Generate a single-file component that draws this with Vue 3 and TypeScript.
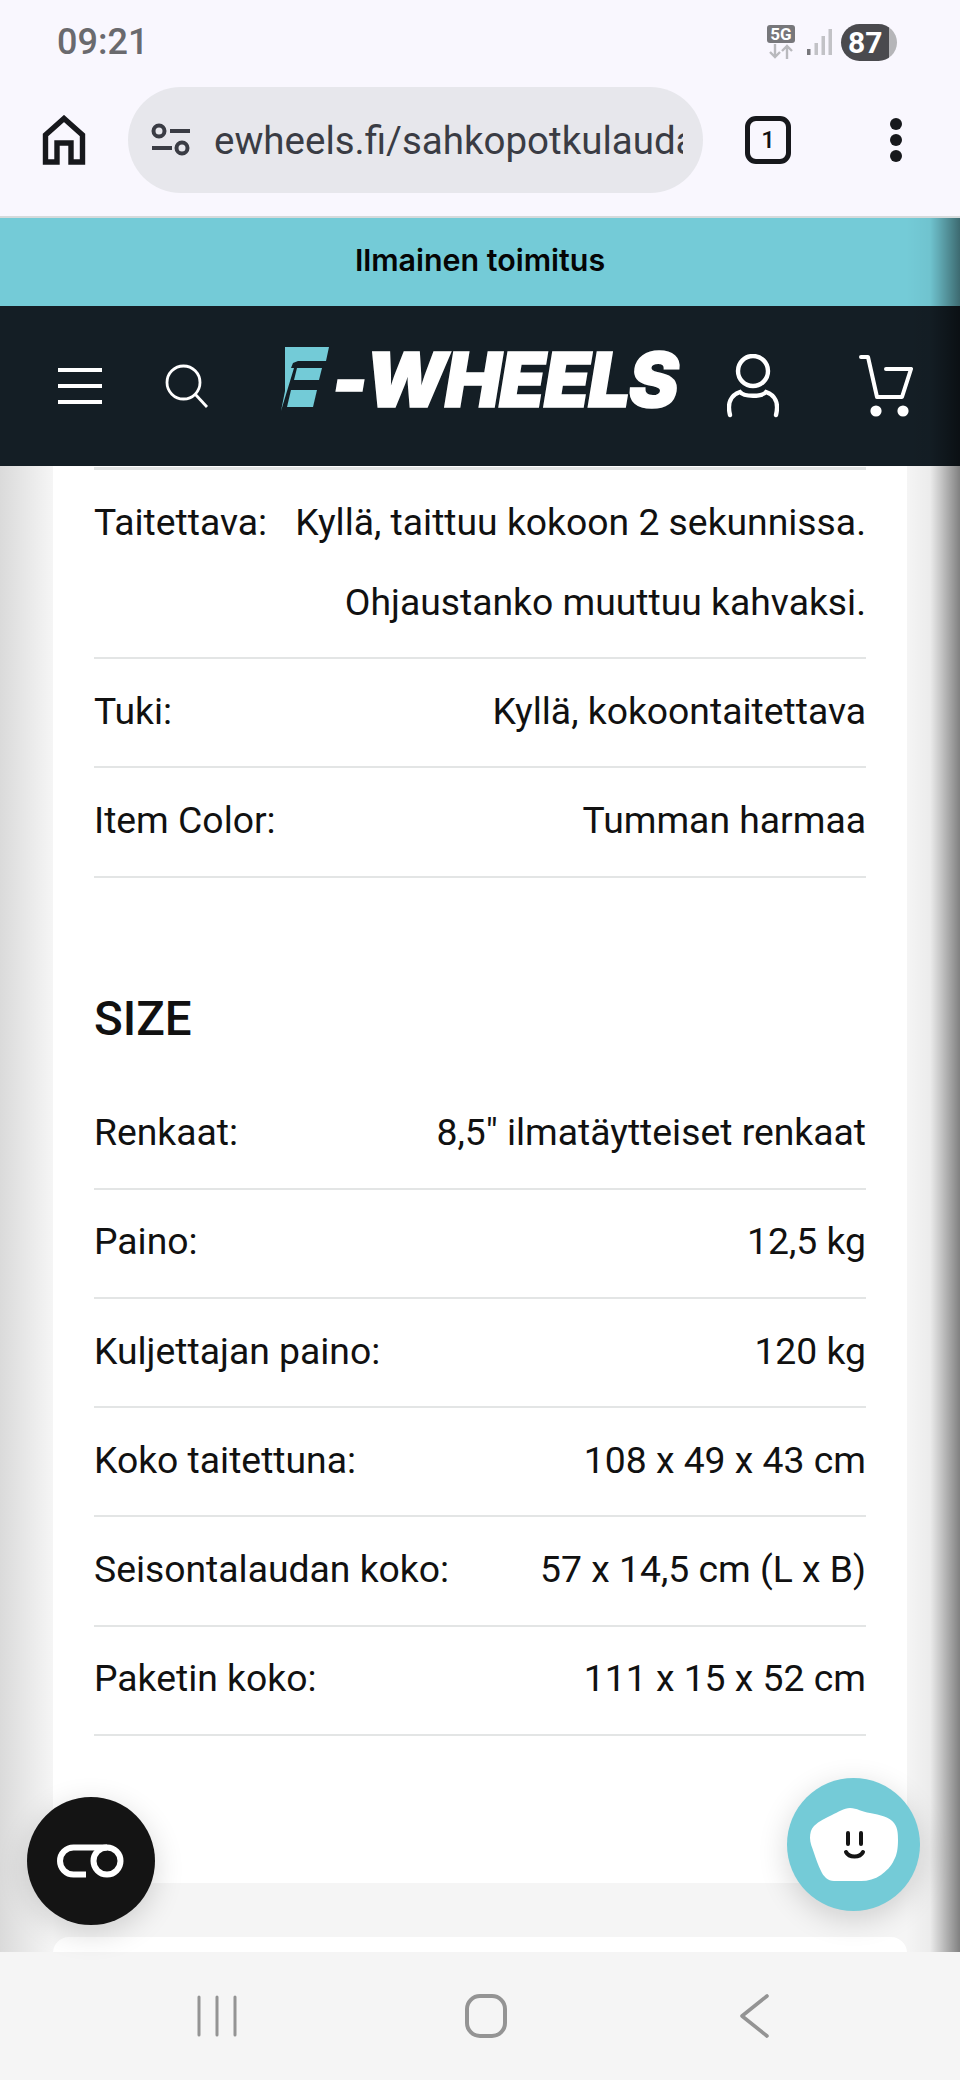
<script setup lang="ts">
interface SpecRow {
  label: string
  value: string[]
}

const colorRows: SpecRow[] = [
  { label: 'Taitettava:', value: ['Kyllä, taittuu kokoon 2 sekunnissa.', 'Ohjaustanko muuttuu kahvaksi.'] },
  { label: 'Tuki:', value: ['Kyllä, kokoontaitettava'] },
  { label: 'Item Color:', value: ['Tumman harmaa'] },
]

const sizeRows: SpecRow[] = [
  { label: 'Renkaat:', value: ['8,5" ilmatäytteiset renkaat'] },
  { label: 'Paino:', value: ['12,5 kg'] },
  { label: 'Kuljettajan paino:', value: ['120 kg'] },
  { label: 'Koko taitettuna:', value: ['108 x 49 x 43 cm'] },
  { label: 'Seisontalaudan koko:', value: ['57 x 14,5 cm (L x B)'] },
  { label: 'Paketin koko:', value: ['111 x 15 x 52 cm'] },
]
</script>

<template>
  <div class="screen">
    <div class="browser-chrome">
      <div class="status-bar">
        <span class="clock">09:21</span>
        <div class="status-icons">
          <div class="network">
            <span class="network-badge">5G</span>
            <svg width="28" height="15" viewBox="0 0 28 15" fill="none" stroke="#b9b9bd" stroke-width="2.4">
              <path d="M8 0v13M3 8l5 5 5-5" />
              <path d="M20 15V2M15 7l5-5 5 5" />
            </svg>
          </div>
          <svg class="signal" width="26" height="26" viewBox="0 0 26 26">
            <rect x="0" y="20" width="3.5" height="6" fill="#77777b" />
            <rect x="7.5" y="14" width="3.5" height="12" fill="#c2c2c6" />
            <rect x="14.5" y="7" width="3.5" height="19" fill="#c2c2c6" />
            <rect x="21.5" y="0" width="3.5" height="26" fill="#c2c2c6" />
          </svg>
          <div class="battery"><span>87</span></div>
        </div>
      </div>
      <div class="toolbar">
        <svg class="home-icon" width="44" height="50" viewBox="0 0 44 50" fill="none" stroke="#17181c" stroke-width="5.4">
          <path d="M3.5 47V20L22 3.5 40.5 20v27H29V28H15v19z" />
        </svg>
        <div class="url-pill">
          <svg width="40" height="34" viewBox="0 0 40 34" fill="none" stroke="#3a3c44" stroke-width="4">
            <circle cx="8" cy="8" r="5.5" />
            <path d="M19 8h20M1 25h20" />
            <circle cx="31" cy="25" r="5.5" />
          </svg>
          <span class="url-text">ewheels.fi/sahkopotkulauda</span>
        </div>
        <div class="tab-count">1</div>
        <div class="menu-dots"><i></i><i></i><i></i></div>
      </div>
    </div>

    <div class="promo">Ilmainen toimitus</div>

    <header class="site-header">
      <div class="header-left">
        <div class="hamburger"><i></i><i></i><i></i></div>
        <svg width="44" height="44" viewBox="0 0 44 44" fill="none" stroke="#fff" stroke-width="2.8">
          <circle cx="18.5" cy="18.5" r="16.5" />
          <path d="M30 30l12 13" />
        </svg>
      </div>
      <div class="logo">
        <svg width="50" height="66" viewBox="0 0 50 66" fill="#73cbd7">
          <path d="M5 1H49L46 15H18L13 17 11 22 14 22 1 65 5 45z" />
          <path d="M17 22H42L39 34H14z" />
          <path d="M11 44H37L33 61H7z" />
        </svg>
        <span class="logo-text">-WHEELS</span>
      </div>
      <div class="header-right">
        <svg width="52" height="64" viewBox="0 0 52 64" fill="none" stroke="#fff" stroke-width="4.4" stroke-linecap="round">
          <circle cx="26" cy="17" r="15" />
          <path d="M3 61c-3-12 1-20 10-23 4 5 22 5 26 0 9 3 13 11 10 23" />
        </svg>
        <svg width="54" height="64" viewBox="0 0 54 64" fill="none" stroke="#fff" stroke-width="4" stroke-linecap="round" stroke-linejoin="round">
          <path d="M2 3h7l9 40h25l9-28H27" />
          <circle cx="17" cy="57" r="3.6" fill="#fff" />
          <circle cx="44" cy="57" r="3.6" fill="#fff" />
        </svg>
      </div>
    </header>

    <main class="content">
      <section class="card">
        <div class="spec-table">
          <div v-for="row in colorRows" :key="row.label" class="spec-row">
            <span class="spec-label">{{ row.label }}</span>
            <div class="spec-value">
              <div v-for="line in row.value" :key="line">{{ line }}</div>
            </div>
          </div>
        </div>

        <h2 class="section-title">SIZE</h2>

        <div class="spec-table no-top">
          <div v-for="row in sizeRows" :key="row.label" class="spec-row">
            <span class="spec-label">{{ row.label }}</span>
            <div class="spec-value">
              <div v-for="line in row.value" :key="line">{{ line }}</div>
            </div>
          </div>
        </div>
      </section>
      <div class="next-card"></div>
    </main>

    <nav class="android-nav">
      <svg width="40" height="42" viewBox="0 0 40 42" stroke="#949494" stroke-width="3" stroke-linecap="round">
        <path d="M2 2v38M20 2v38M38 2v38" />
      </svg>
      <svg width="42" height="44" viewBox="0 0 42 44" fill="none" stroke="#949494" stroke-width="4">
        <rect x="2" y="2" width="38" height="40" rx="13" />
      </svg>
      <svg width="30" height="44" viewBox="0 0 30 44" fill="none" stroke="#949494" stroke-width="3.6" stroke-linecap="round" stroke-linejoin="round">
        <path d="M28 2L3 22l25 20" />
      </svg>
    </nav>

    <div class="edge-shade"></div>

    <button class="fab fab-dark" type="button">
      <svg width="68" height="34" viewBox="0 0 68 34" fill="none" stroke="#fff" stroke-width="6">
        <path d="M29 30.5H16.5a13.5 13.5 0 0 1 0-27H50" />
        <circle cx="50" cy="17" r="13.5" />
      </svg>
    </button>
    <button class="fab fab-teal" type="button">
      <svg width="88" height="73" viewBox="0 0 88 73">
        <path d="M40 0C47 0 52 4 60 5 70 7 80 9 84 15 88 20 88 27 88 32 88 40 87 47 84 52 81 59 76 63 71 67 65 71 58 73 51 73L24 73C18 73 13 68 11 63 8 57 6 51 4 45 2 39 0 35 0 30 0 25 1 21 4 18 9 13 16 10 22 7 28 4 34 0 40 0z" fill="#fff" />
        <g fill="none" stroke="#141414" stroke-width="4" stroke-linecap="round">
          <path d="M38 25v11M51 25v11M36 44c3 6 14 6 17 0" />
        </g>
      </svg>
    </button>
  </div>
</template>

<style scoped>
.screen {
  position: relative;
  display: flex;
  flex-direction: column;
  width: 960px;
  height: 2080px;
  overflow: hidden;
  background: #f5f5f5;
  font-family: Roboto, "Liberation Sans", sans-serif;
  color: #111;
}

.browser-chrome {
  flex: none;
  height: 218px;
  box-sizing: border-box;
  background: #f9f7fe;
  border-bottom: 2px solid #d5dadb;
}

.status-bar {
  display: flex;
  justify-content: space-between;
  align-items: center;
  height: 84px;
  padding: 0 63px 0 57px;
}

.clock {
  font-size: 36px;
  font-weight: 500;
  color: #6a6a6e;
}

.status-icons {
  display: flex;
  align-items: center;
  gap: 12px;
}

.signal {
  margin-right: -4px;
}

.network {
  display: flex;
  flex-direction: column;
  align-items: center;
  gap: 1px;
}

.network-badge {
  width: 28px;
  height: 18px;
  border-radius: 3px;
  background: #77777b;
  color: #fff;
  font-size: 17px;
  font-weight: 700;
  line-height: 18px;
  text-align: center;
}

.battery {
  width: 56px;
  height: 37px;
  border-radius: 19px;
  background: linear-gradient(to right, #4a4a4e 48px, #b5b5b8 48px);
  color: #fff;
  font-size: 30px;
  font-weight: 700;
  line-height: 37px;
  padding-left: 7px;
  box-sizing: border-box;
}

.toolbar {
  display: flex;
  align-items: center;
  height: 106px;
  margin-top: 3px;
  padding-left: 42px;
}

.home-icon {
  flex: none;
}

.url-pill {
  display: flex;
  align-items: center;
  gap: 23px;
  width: 575px;
  height: 106px;
  box-sizing: border-box;
  margin-left: 42px;
  padding: 0 20px 0 23px;
  border-radius: 53px;
  background: #e7e7ec;
}

.url-pill svg {
  flex: none;
}

.url-text {
  flex: 1;
  overflow: hidden;
  white-space: nowrap;
  font-size: 38.5px;
  color: #3a3c44;
}

.tab-count {
  width: 46px;
  height: 48px;
  box-sizing: border-box;
  margin-left: 42px;
  border: 5px solid #17181c;
  border-radius: 11px;
  font-size: 24px;
  font-weight: 500;
  line-height: 38px;
  text-align: center;
}

.menu-dots {
  display: flex;
  flex-direction: column;
  gap: 4px;
  margin-left: 99px;
}

.menu-dots i {
  width: 12px;
  height: 12px;
  border-radius: 50%;
  background: #17181c;
}

.promo {
  flex: none;
  height: 88px;
  background: #74cbd7;
  color: #050505;
  font-family: Inter, "Liberation Sans", sans-serif;
  font-size: 30.4px;
  font-weight: 600;
  line-height: 84px;
  text-align: center;
}

.site-header {
  flex: none;
  display: flex;
  align-items: center;
  height: 160px;
  padding: 0 47px 0 58px;
  box-sizing: border-box;
  background: #141e25;
}

.header-left,
.header-right {
  flex: none;
  display: flex;
  align-items: center;
}

.header-left {
  gap: 63px;
}

.header-right {
  gap: 80px;
  margin-left: auto;
}

.hamburger {
  display: flex;
  flex-direction: column;
  gap: 12px;
  width: 44px;
}

.hamburger i {
  height: 4px;
  background: #fff;
}

.logo {
  flex: none;
  display: flex;
  align-items: center;
  gap: 2px;
  margin-left: 71px;
  margin-bottom: 14px;
}

.logo-text {
  font-family: Inter, "Liberation Sans", sans-serif;
  font-size: 75px;
  font-style: italic;
  font-weight: 900;
  line-height: 1;
  letter-spacing: -2px;
  white-space: nowrap;
  color: #fff;
  -webkit-text-stroke: 1.5px #fff;
}

.content {
  flex: 1;
  min-height: 0;
  padding: 0 53px;
  overflow: hidden;
}

.card {
  height: 1417px;
  box-sizing: border-box;
  padding: 1px 41px 0;
  background: #fff;
}

.spec-table {
  border-top: 3px solid #e3e5e5;
}

.spec-table.no-top {
  border-top: 0;
}

.spec-row {
  display: flex;
  justify-content: space-between;
  padding: 11.6px 0 15.6px;
  border-bottom: 2px solid #e3e5e5;
  font-size: 37.3px;
  line-height: 80px;
}

.spec-label {
  flex: none;
}

.spec-value {
  text-align: right;
}

.section-title {
  margin: 0;
  padding-top: 109px;
  height: 94px;
  font-size: 47.5px;
  font-weight: 500;
  line-height: 64px;
  color: #111;
}

.next-card {
  height: 40px;
  margin-top: 54px;
  border-radius: 16px 16px 0 0;
  background: #fff;
}

.android-nav {
  position: relative;
  z-index: 2;
  flex: none;
  display: flex;
  align-items: center;
  height: 128px;
  padding-left: 197px;
  background: #f5f5f5;
}

.android-nav svg:nth-child(2) {
  margin-left: 228px;
}

.android-nav svg:nth-child(3) {
  margin-left: 232px;
}

.edge-shade {
  position: absolute;
  top: 218px;
  left: 0;
  right: 0;
  height: 1734px;
  pointer-events: none;
  background: linear-gradient(to left, rgba(0, 0, 0, 0.48), rgba(0, 0, 0, 0.18) 20px, rgba(0, 0, 0, 0.04) 30px, rgba(0, 0, 0, 0) 54px);
}

.edge-shade::before {
  content: "";
  position: absolute;
  top: 248px;
  bottom: 0;
  left: 0;
  width: 53px;
  background: linear-gradient(to right, rgba(0, 0, 0, 0.11), rgba(0, 0, 0, 0));
}

.fab {
  position: absolute;
  z-index: 3;
  display: flex;
  align-items: center;
  justify-content: center;
  padding: 0;
  border: 0;
  border-radius: 50%;
}

.fab-dark {
  left: 27px;
  top: 1797px;
  width: 128px;
  height: 128px;
  background: #141414;
  box-shadow: 0 8px 30px rgba(0, 0, 0, 0.16);
}

.fab-teal {
  left: 787px;
  top: 1778px;
  width: 133px;
  height: 133px;
  background: #74cbd7;
  box-shadow: 0 8px 30px rgba(0, 0, 0, 0.16);
}
</style>

<style>
html,
body {
  margin: 0;
  background: #f5f5f5;
}
</style>
